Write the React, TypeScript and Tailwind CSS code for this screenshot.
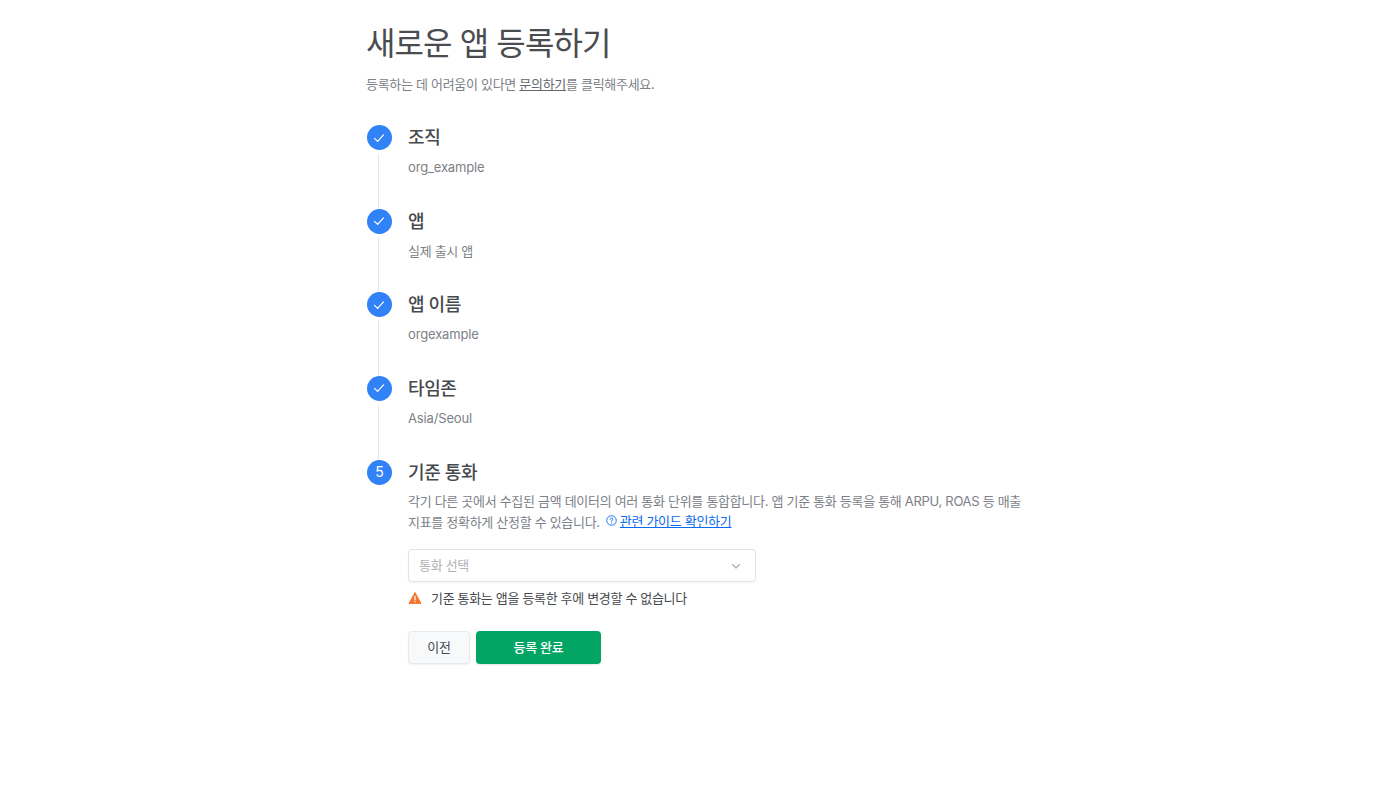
const font = '[font-family:Inter,"Noto_Sans_CJK_KR",sans-serif]';

const doneSteps = [
  { title: "조직", value: "org_example", latin: true },
  { title: "앱", value: "실제 출시 앱", latin: false },
  { title: "앱 이름", value: "orgexample", latin: true },
  { title: "타임존", value: "Asia/Seoul", latin: true },
];

function Check() {
  return (
    <svg width="12" height="12" viewBox="0 0 12 12" fill="none" className="-ml-px">
      <path d="M1.5 6.4L4.6 9.4L10.5 2.9" stroke="white" strokeWidth="1.2" strokeLinecap="round" strokeLinejoin="round" />
    </svg>
  );
}

export default function App() {
  return (
    <div className={`min-h-[800px] bg-white ${font}`}>
      <div className="ml-[366px] w-[668px] pt-[20px]">
        <h1 className="text-[32px] leading-[48px] font-normal text-[#4a4c50] tracking-[-0.9px]">새로운 앱 등록하기</h1>
        <p className="mt-[4px] text-[13px] leading-[24px] text-[#7c8187] tracking-[-0.3px]">
          등록하는 데 어려움이 있다면 <span className="underline text-[#63676d]">문의하기</span>를 클릭해주세요.
        </p>

        <div className="mt-[29px] pl-px">
          {doneSteps.map((s) => (
            <div key={s.title} className="flex gap-4 h-[83.67px]">
              <div className="w-[25px] flex flex-col">
                <div className="w-[25px] h-[25px] shrink-0 rounded-full bg-[#3182f6] flex items-center justify-center">
                  <Check />
                </div>
                <div className="w-px flex-1 mt-1 ml-[11px] bg-[#e3e5e8]" />
              </div>
              <div>
                <div className="text-lg leading-[25px] font-medium text-[#46494d] tracking-[-0.4px]">{s.title}</div>
                <div className={`mt-[5px] text-[13px] leading-[24px] text-[#7c8187] ${s.latin ? "tracking-[-0.15px]" : "tracking-[-0.3px]"}`}>{s.value}</div>
              </div>
            </div>
          ))}

          <div className="flex gap-4">
            <div className="w-[25px]">
              <div className="w-[25px] h-[25px] rounded-full bg-[#3182f6] flex items-center justify-center text-sm text-white">5</div>
            </div>
            <div className="flex-1">
              <div className="text-lg leading-[25px] font-medium text-[#46494d] tracking-[-0.4px]">기준 통화</div>
              <p className="mt-[6px] w-[625px] text-[13px] leading-[20px] text-[#7c8187] tracking-[-0.3px]">
                각기 다른 곳에서 수집된 금액 데이터의 여러 통화 단위를 통합합니다. 앱 기준 통화 등록을 통해 ARPU, ROAS 등 매출
                <br />
                지표를 정확하게 산정할 수 있습니다.
                <a className="ml-[6px] text-[#0b6bf0] underline inline-flex items-center gap-[3px]">
                  <svg width="11" height="11" viewBox="0 0 12 12" fill="none">
                    <circle cx="6" cy="6" r="5.2" stroke="#0b6bf0" strokeWidth="1" />
                    <path d="M4.5 4.7C4.5 3.8 5.2 3.3 6 3.3C6.9 3.3 7.5 3.9 7.5 4.6C7.5 5.6 6 5.7 6 7" stroke="#0b6bf0" strokeWidth="1" strokeLinecap="round" />
                    <circle cx="6" cy="8.7" r="0.6" fill="#0b6bf0" />
                  </svg>
                  관련 가이드 확인하기
                </a>
              </p>

              <div className="mt-[18px] w-[348px] h-[33px] rounded border border-[#e1e3e6] shadow-[0_1px_2px_rgba(0,0,0,0.05)] flex items-center justify-between pl-[10px] pr-[13px] text-[13px] tracking-[-0.3px] text-[#b0b4b9]">
                <span>통화 선택</span>
                <svg width="12" height="12" viewBox="0 0 12 12" fill="none">
                  <path d="M2.5 4.5L6 8L9.5 4.5" stroke="#a4a8ad" strokeWidth="1.1" strokeLinecap="round" strokeLinejoin="round" />
                </svg>
              </div>

              <div className="mt-[5px] flex items-center gap-[9px] text-[13px] tracking-[-0.33px] leading-[22px] text-[#46494d]">
                <svg width="14" height="14" viewBox="0 0 14 14">
                  <path d="M7 1.6L13 12.4H1Z" fill="#f6762e" stroke="#f6762e" strokeLinejoin="round" />
                  <rect x="6.4" y="5" width="1.2" height="4.2" fill="white" />
                  <rect x="6.4" y="10" width="1.2" height="1.2" fill="white" />
                </svg>
                <span>기준 통화는 앱을 등록한 후에 변경할 수 없습니다</span>
              </div>

              <div className="mt-[22px] flex gap-[6px] text-[13px] tracking-[-0.3px]">
                <button className="w-[62px] h-[33px] rounded bg-[#f8f9fa] border border-[#e7e9ec] text-[#46494d] shadow-[0_1px_2px_rgba(0,0,0,0.06)]">이전</button>
                <button className="w-[125px] h-[33px] rounded bg-[#03a564] text-white font-medium shadow-[0_1px_2px_rgba(0,0,0,0.1)]">등록 완료</button>
              </div>
            </div>
          </div>
        </div>
      </div>
    </div>
  );
}
